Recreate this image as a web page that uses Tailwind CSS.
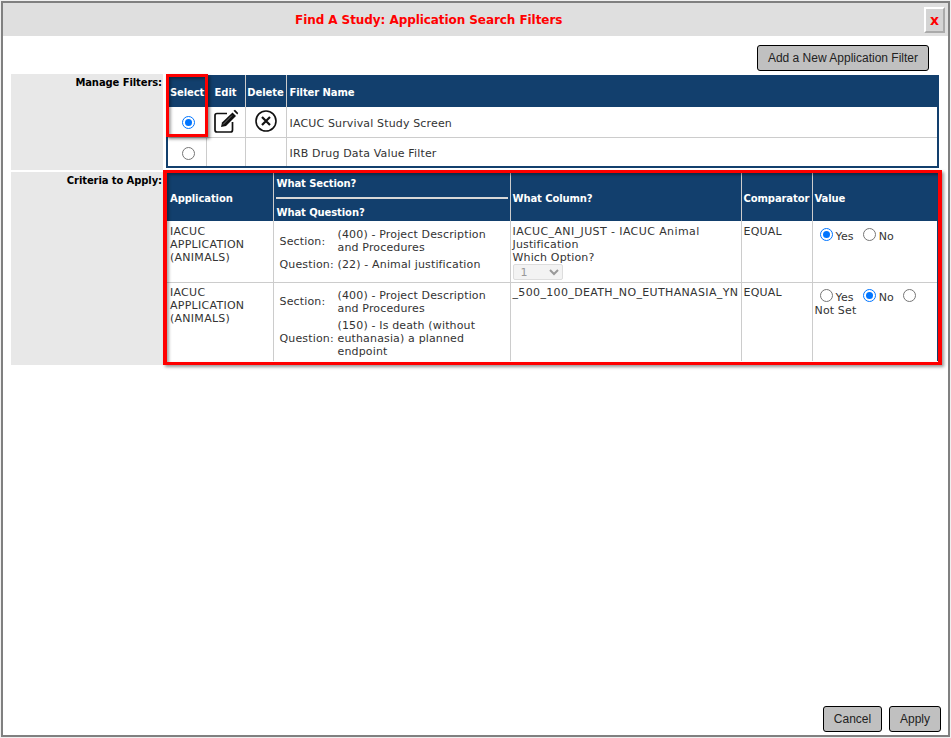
<!DOCTYPE html>
<html lang="en">
<head>
    <meta charset="UTF-8">
    <title>Find A Study: Application Search Filters</title>
    <script src="https://cdn.jsdelivr.net/npm/@tailwindcss/browser@4"></script>
</head>
<body class="bg-white overflow-hidden">
    <div class="w-[951px] h-[738px] flex flex-col p-px bg-[#f0f0f0]">
    <div class="flex-1 flex flex-col border-2 border-[#808080] bg-white font-['DejaVu_Sans',Verdana,sans-serif] text-[11px] leading-[13px] tracking-[0.15px] text-[#333]">
        <!-- Title bar -->
        <div class="relative h-[33px] shrink-0 bg-[#dfdfdf] flex items-center pl-[292px]">
            <h1 class="text-[12px] font-bold tracking-[-0.07px] text-[#f00] pt-[2px]">Find A Study: Application Search Filters</h1>
            <button class="absolute right-[3px] top-[4px] w-[21px] h-[26px] bg-[#d4d4d4] border-2 border-t-white border-l-white border-r-[#aaa] border-b-[#aaa] text-[#f00] font-bold text-[14px] leading-[14px]">x</button>
        </div>

        <!-- Top action -->
        <div class="h-[38px] shrink-0 flex justify-end items-start pt-[9px] pr-[19px]">
            <button class="h-[26px] px-[10px] bg-[#c0c0c0] border border-black rounded-[3px] font-['Liberation_Sans',Arial,sans-serif] tracking-normal text-[12px] text-[#222]">Add a New Application Filter</button>
        </div>

        <!-- Manage filters -->
        <div class="flex pl-[8px] pr-[10px]">
            <div class="w-[152px] shrink-0 bg-[#e8e8e8] text-right text-[10px] font-bold tracking-[-0.1px] text-black pt-[2px] pr-px">Manage Filters:</div>
            <div class="ml-[3px] flex-1 relative pb-[2px]">
                <table class="w-[773px] table-fixed border-collapse border-2 border-t-0 border-[#123f6d] mt-px">
                    <thead>
                        <tr class="h-[32px] bg-[#123f6d] text-white text-[10px] font-bold tracking-[-0.1px] text-left">
                            <th class="w-[39px] pl-[2px] pt-[2px] border-r border-[#ccc]">Select</th>
                            <th class="w-[39px] text-center pt-[2px] border-r border-[#ccc]">Edit</th>
                            <th class="w-[41px] text-center pt-[2px] border-r border-[#ccc]">Delete</th>
                            <th class="pl-[3px] pt-[2px]">Filter Name</th>
                        </tr>
                    </thead>
                    <tbody>
                        <tr class="h-[30px] border-b border-[#ccc]">
                            <td class="border-r border-[#ccc] text-center pl-[4px]"><span class="inline-block align-middle w-[13px] h-[13px] rounded-full border border-[#0075ff] p-[2px]"><span class="block w-full h-full rounded-full bg-[#0075ff]"></span></span></td>
                            <td class="border-r border-[#ccc]">
                                <svg class="mx-auto" width="26" height="26" viewBox="0 0 26 26" fill="none">
                                    <path d="M14 4.500H4a2 2 0 0 0-2 2V21a2 2 0 0 0 2 2h13.500a2 2 0 0 0 2-2V13" stroke="#111" stroke-width="1.700"/>
                                    <path d="M8 18l1-4.500L19.500 3.500 23 7 13 17z" fill="#111"/>
                                    <path d="M20.500 1.800 22 .800 25.200 4 24.300 5.600z" fill="#111"/>
                                    <path d="M10 15.500 19 6.500" stroke="#888" stroke-width="0.800"/>
                                </svg>
                            </td>
                            <td class="border-r border-[#ccc]">
                                <svg class="mx-auto mb-[2px]" width="24" height="24" viewBox="0 0 24 24" fill="none" stroke="#111">
                                    <circle cx="12" cy="12" r="10" stroke-width="1.600"/>
                                    <path d="M8 8l8 8M16 8l-8 8" stroke-width="2.200"/>
                                </svg>
                            </td>
                            <td class="pl-[3px] pt-[4px]">IACUC Survival Study Screen</td>
                        </tr>
                        <tr class="h-[30px]">
                            <td class="border-r border-[#ccc] text-center pl-[4px] pt-[2px]"><span class="inline-block align-middle w-[13px] h-[13px] rounded-full border border-[#767676]"></span></td>
                            <td class="border-r border-[#ccc]"></td>
                            <td class="border-r border-[#ccc]"></td>
                            <td class="pl-[3px] pt-[4px]">IRB Drug Data Value Filter</td>
                        </tr>
                    </tbody>
                </table>
                <!-- highlight over the Select column -->
                <div class="absolute left-0 top-0 w-[42px] h-[63px] border-[3px] border-[#f00] shadow-[2px_2px_3px_rgba(0,0,0,0.45),inset_2px_2px_3px_rgba(0,0,0,0.35)]"></div>
            </div>
        </div>

        <!-- Criteria -->
        <div class="flex pl-[8px] pr-[5px] mt-[2px]">
            <div class="w-[152px] shrink-0 bg-[#e8e8e8] text-right text-[10px] font-bold tracking-[-0.1px] text-black pt-[2px] pr-px h-[193px]">Criteria to Apply:</div>
            <div class="relative -mt-[2px] w-[779px] shrink-0 h-[195px] border-[4px] border-t-[3px] border-b-[3px] border-[#f00] shadow-[2px_2px_3px_rgba(0,0,0,0.4)]">
                <table class="w-full table-fixed border-collapse">
                    <thead>
                        <tr class="h-[48px] bg-[#123f6d] text-white text-[10px] font-bold tracking-[-0.1px] text-left">
                            <th class="w-[106px] pl-[3px] pt-[3px] border-r border-[#ccc]">Application</th>
                            <th class="w-[237px] p-0 border-r border-[#ccc]">
                                <div class="h-[26px] ml-[2px] mr-[2px] pl-px pt-[4px] border-b-2 border-[#d8d8d8]">What Section?</div>
                                <div class="pl-[3px] pt-[7px] h-[22px]">What Question?</div>
                            </th>
                            <th class="w-[231px] pl-[2px] pt-[3px] border-r border-[#ccc]">What Column?</th>
                            <th class="w-[71px] pl-[2px] pt-[3px] border-r border-[#ccc]">Comparator</th>
                            <th class="pl-[2px] pt-[3px]">Value</th>
                        </tr>
                    </thead>
                    <tbody class="align-top">
                        <tr class="h-[61px] border-b border-[#ccc]">
                            <td class="pl-[3px] pt-[4px] border-r border-[#ccc] tracking-[0.27px]">IACUC APPLICATION (ANIMALS)</td>
                            <td class="border-r border-[#ccc]">
                                <div class="grid grid-cols-[58px_1fr] gap-y-[4px] pl-[6px] pt-[7px] pr-[8px] items-center">
                                    <span>Section:</span><span>(400) - Project Description and Procedures</span>
                                    <span>Question:</span><span>(22) - Animal justification</span>
                                </div>
                            </td>
                            <td class="pl-[2px] pt-[4px] border-r border-[#ccc]">
                                <span class="tracking-[0.4px]">IACUC_ANI_JUST - IACUC Animal</span> Justification<br>Which Option?
                                <select disabled class="block w-[50px] h-[16px] bg-[#f3f3f3] border border-[#ddd] rounded-[2px] text-[#999] pl-[3px] text-[11px] leading-[13px]"><option>1</option></select>
                            </td>
                            <td class="pl-[2px] pt-[4px] border-r border-[#ccc] tracking-[0.2px]">EQUAL</td>
                            <td class="pl-[2px] pt-[5px] border-r border-[#123f6d]">
                                <span class="inline-flex items-start gap-[3px] ml-[5px] mr-[9px]"><span class="w-[13px] h-[13px] mt-[2px] rounded-full border border-[#0075ff] p-[2px]"><span class="block w-full h-full rounded-full bg-[#0075ff]"></span></span><span class="mt-[4px]">Yes</span></span><span class="inline-flex items-start gap-[3px]"><span class="w-[13px] h-[13px] mt-[2px] rounded-full border border-[#767676]"></span><span class="mt-[4px]">No</span></span>
                            </td>
                        </tr>
                        <tr class="h-[79px]">
                            <td class="pl-[3px] pt-[3px] border-r border-[#ccc] tracking-[0.27px]">IACUC APPLICATION (ANIMALS)</td>
                            <td class="border-r border-[#ccc]">
                                <div class="grid grid-cols-[58px_1fr] gap-y-[4px] pl-[6px] pt-[6px] pr-[8px] items-center">
                                    <span>Section:</span><span>(400) - Project Description and Procedures</span>
                                    <span>Question:</span><span>(150) - Is death (without euthanasia) a planned endpoint</span>
                                </div>
                            </td>
                            <td class="pl-[2px] pt-[3px] border-r border-[#ccc] tracking-[0.35px]">_500_100_DEATH_NO_EUTHANASIA_YN</td>
                            <td class="pl-[2px] pt-[3px] border-r border-[#ccc] tracking-[0.2px]">EQUAL</td>
                            <td class="pl-[2px] pt-[4px] border-r border-[#123f6d]">
                                <span class="inline-flex items-start gap-[3px] ml-[5px] mr-[9px]"><span class="w-[13px] h-[13px] mt-[2px] rounded-full border border-[#767676]"></span><span class="mt-[4px]">Yes</span></span><span class="inline-flex items-start gap-[3px] mr-[9px]"><span class="w-[13px] h-[13px] mt-[2px] rounded-full border border-[#0075ff] p-[2px]"><span class="block w-full h-full rounded-full bg-[#0075ff]"></span></span><span class="mt-[4px]">No</span></span><span class="inline-block w-[13px] h-[13px] align-top mt-[2px] rounded-full border border-[#767676]"></span>
                                <div class="-mt-px">Not Set</div>
                            </td>
                        </tr>
                    </tbody>
                </table>
                <!-- soft shadow the highlight drops over the table -->
                <div class="absolute inset-0 pointer-events-none shadow-[inset_2px_2px_3px_rgba(0,0,0,0.35)]"></div>
            </div>
        </div>

        <!-- Footer -->
        <div class="mt-auto flex justify-end gap-[7px] pr-[7px] pb-[3px]">
            <button class="h-[26px] w-[59px] bg-[#c0c0c0] border border-black rounded-[3px] font-['Liberation_Sans',Arial,sans-serif] tracking-normal text-[12px] text-[#222]">Cancel</button>
            <button class="h-[26px] w-[52px] bg-[#c0c0c0] border border-black rounded-[3px] font-['Liberation_Sans',Arial,sans-serif] tracking-normal text-[12px] text-[#222]">Apply</button>
        </div>
    </div>
    </div>
</body>
</html>
